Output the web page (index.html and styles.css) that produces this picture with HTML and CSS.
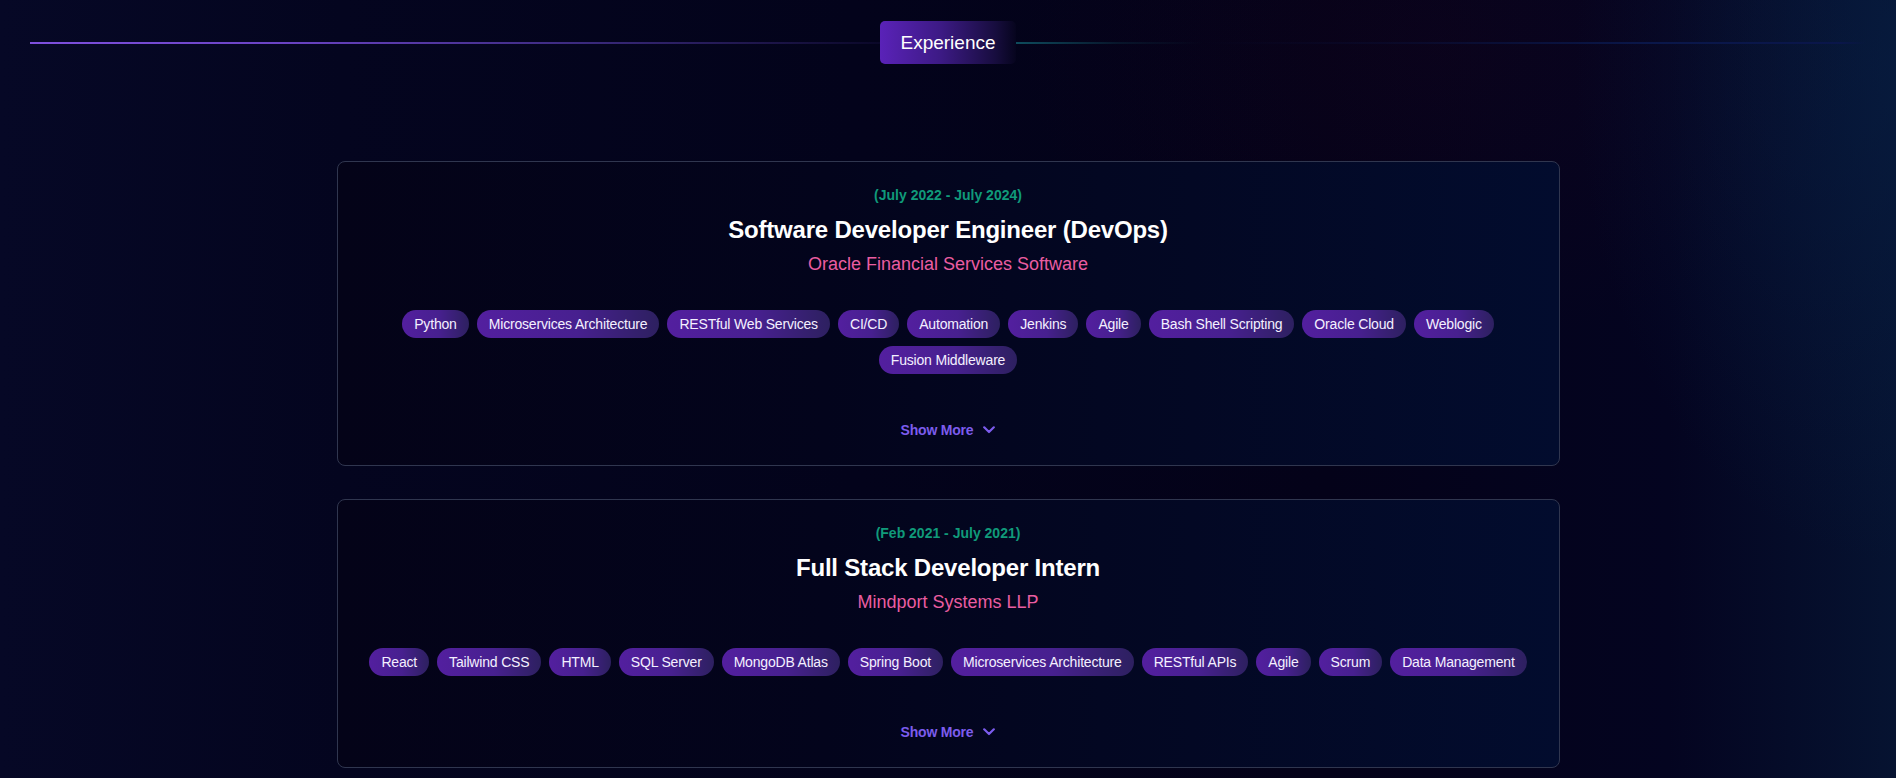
FILE: index.html
```html
<!DOCTYPE html>
<html lang="en">
<head>
<meta charset="utf-8">
<title>Experience</title>
<link rel="stylesheet" href="styles.css">
</head>
<body>
<section class="experience">
  <div class="heading">
    <span class="line line-left"></span>
    <h2 class="badge">Experience</h2>
    <span class="line line-right"></span>
  </div>

  <div class="cards">
    <article class="card">
      <p class="date">(July 2022 - July 2024)</p>
      <h3 class="title">Software Developer Engineer (DevOps)</h3>
      <p class="company">Oracle Financial Services Software</p>
      <ul class="tags">
        <li class="tag">Python</li>
        <li class="tag">Microservices Architecture</li>
        <li class="tag">RESTful Web Services</li>
        <li class="tag">CI/CD</li>
        <li class="tag">Automation</li>
        <li class="tag">Jenkins</li>
        <li class="tag">Agile</li>
        <li class="tag">Bash Shell Scripting</li>
        <li class="tag">Oracle Cloud</li>
        <li class="tag">Weblogic</li>
        <li class="tag">Fusion Middleware</li>
      </ul>
      <button class="more" type="button">Show More
        <svg class="chev" width="12" height="8" viewBox="0 0 12 8" aria-hidden="true"><polyline points="1.2,1.3 6,6 10.8,1.3" fill="none" stroke="currentColor" stroke-width="2.2" stroke-linecap="round" stroke-linejoin="round"/></svg>
      </button>
    </article>

    <article class="card">
      <p class="date">(Feb 2021 - July 2021)</p>
      <h3 class="title">Full Stack Developer Intern</h3>
      <p class="company">Mindport Systems LLP</p>
      <ul class="tags">
        <li class="tag">React</li>
        <li class="tag">Tailwind CSS</li>
        <li class="tag">HTML</li>
        <li class="tag">SQL Server</li>
        <li class="tag">MongoDB Atlas</li>
        <li class="tag">Spring Boot</li>
        <li class="tag">Microservices Architecture</li>
        <li class="tag">RESTful APIs</li>
        <li class="tag">Agile</li>
        <li class="tag">Scrum</li>
        <li class="tag">Data Management</li>
      </ul>
      <button class="more" type="button">Show More
        <svg class="chev" width="12" height="8" viewBox="0 0 12 8" aria-hidden="true"><polyline points="1.2,1.3 6,6 10.8,1.3" fill="none" stroke="currentColor" stroke-width="2.2" stroke-linecap="round" stroke-linejoin="round"/></svg>
      </button>
    </article>
  </div>
</section>
</body>
</html>
```

FILE: styles.css
```css
html {
  min-height: 100%;
  background:
    radial-gradient(ellipse 320px 500px at 100% 8%, rgba(8, 32, 70, 0.55), rgba(8, 32, 70, 0) 100%),
    radial-gradient(ellipse 420px 300px at 76% 6%, rgba(40, 5, 30, 0.18), rgba(40, 5, 30, 0) 100%),
    linear-gradient(90deg, #060826 0%, #04051f 18%, #03031b 45%, #040219 70%, #040420 88%, #061331 100%);
}

body {
  margin: 0;
  font-family: "Liberation Sans", Arial, sans-serif;
  color: #ffffff;
}

.experience {
  padding: 21px 0 10px;
}

.heading {
  display: flex;
  align-items: center;
  padding: 0 30px;
}

.line {
  flex: 1;
  height: 2px;
}

.line-left {
  background: linear-gradient(90deg, #7f50df 0%, #6a43c4 30%, #3b2a7e 65%, rgba(20, 14, 60, 0.4) 100%);
}

.line-right {
  background: linear-gradient(90deg, #0e4c5d 0%, rgba(10, 40, 60, 0.5) 12%, rgba(6, 6, 30, 0) 22%, rgba(10, 22, 70, 0.3) 45%, #0a174a 75%, #0a164a 97%, rgba(10, 22, 74, 0) 100%);
}

.badge {
  margin: 0;
  padding: 8px 20px;
  font-size: 19px;
  line-height: 27px;
  font-weight: 400;
  color: #ffffff;
  border-radius: 5px;
  background: linear-gradient(90deg, #5a22b8 0%, #3c1a84 45%, #170d3e 85%, rgba(8, 6, 32, 0.6) 100%);
}

.cards {
  display: flex;
  flex-direction: column;
  gap: 33px;
  margin-top: 97px;
}

.card {
  width: 1223px;
  box-sizing: border-box;
  margin: 0 auto;
  padding: 23px 24px 25px;
  border: 1px solid #30364f;
  border-radius: 8px;
  background: linear-gradient(90deg, #040318 0%, #03041c 40%, #030824 70%, #020c2e 100%);
  display: flex;
  flex-direction: column;
  align-items: center;
  text-align: center;
}

.date {
  margin: 0;
  font-size: 14px;
  line-height: 20px;
  font-weight: 700;
  color: #109a7a;
}

.title {
  margin: 9px 0 0;
  font-size: 24px;
  line-height: 32px;
  font-weight: 700;
  letter-spacing: -0.2px;
  color: #ffffff;
}

.company {
  margin: 4px 0 0;
  font-size: 18px;
  line-height: 28px;
  color: #ea5da1;
}

.tags {
  list-style: none;
  margin: 32px 0 0;
  padding: 0;
  display: flex;
  flex-wrap: wrap;
  justify-content: center;
  gap: 8px;
}

.tag {
  padding: 4px 12px;
  font-size: 14px;
  line-height: 20px;
  letter-spacing: -0.18px;
  color: #f4f0ff;
  border-radius: 999px;
  background: linear-gradient(90deg, #531f9f 0%, #47208f 55%, #2d2060 100%);
}

.more {
  margin-top: 46px;
  padding: 0;
  border: 0;
  background: none;
  font-family: inherit;
  font-size: 14px;
  line-height: 20px;
  font-weight: 700;
  letter-spacing: -0.2px;
  color: #7c5ced;
  display: flex;
  align-items: center;
  gap: 10px;
  cursor: pointer;
}

.chev {
  display: block;
}
```
